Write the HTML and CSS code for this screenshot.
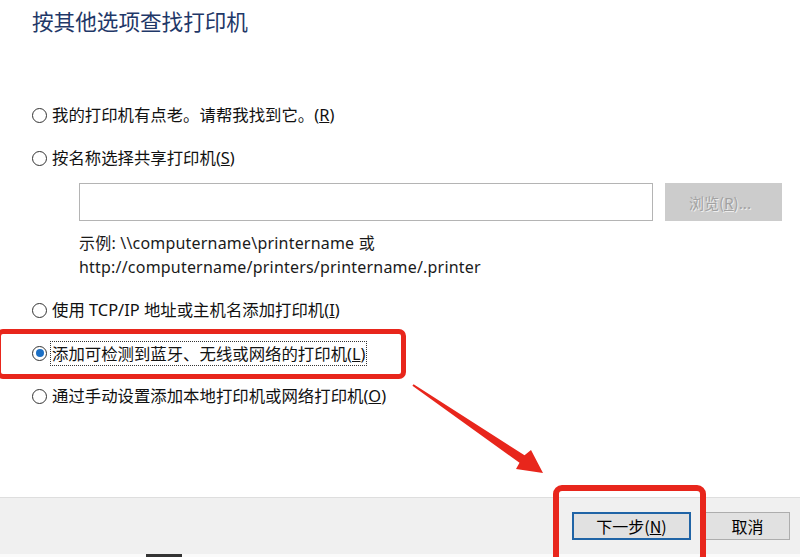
FILE: index.html
```html
<!DOCTYPE html>
<html lang="zh-CN">
<head>
	<meta charset="UTF-8">
	<title>添加打印机</title>
	<link rel="stylesheet" href="styles.css">
</head>
<body>
	<div class="wizard">
		<section class="main">
			<h1 class="title">按其他选项查找打印机</h1>
			<ul class="options">
				<li class="option"><span class="radio"></span><span class="label">我的打印机有点老。请帮我找到它。(<u>R</u>)</span></li>
				<li class="option"><span class="radio"></span><span class="label">按名称选择共享打印机(<u>S</u>)</span></li>
				<li class="share">
					<div class="share-row">
						<div class="input"></div>
						<div class="browse">浏览(<u>R</u>)...</div>
					</div>
					<p class="example">示例: \\computername\printername 或<br>http://computername/printers/printername/.printer</p>
				</li>
				<li class="option"><span class="radio"></span><span class="label">使用 TCP/IP 地址或主机名添加打印机(<u>I</u>)</span></li>
				<li class="option on"><span class="radio"></span><span class="label focus">添加可检测到蓝牙、无线或网络的打印机(<u>L</u>)</span></li>
				<li class="option"><span class="radio"></span><span class="label">通过手动设置添加本地打印机或网络打印机(<u>O</u>)</span></li>
			</ul>
		</section>
		<footer class="footer">
			<div class="buttons">
				<div class="btn default">下一步(<u>N</u>)</div>
				<div class="btn">取消</div>
			</div>
			<div class="edge"><span></span></div>
		</footer>

		<!-- 标注 -->
		<div class="mark mark-option"></div>
		<div class="mark mark-next"></div>
		<svg class="arrow" width="160" height="120" viewBox="0 0 160 120">
			<polygon points="13.6,14.2 124.5,85.3 131,80 143,103 116,99 119.5,92.7 12.4,15.8" fill="#e8261c"/>
		</svg>
	</div>
</body>
</html>
```

FILE: styles.css
```css
* {
	margin:0;
	padding:0;
	box-sizing:border-box;
}
html,body {
	height:100%;
	overflow:hidden;
	background:#fff;
}
body {
	font-family:"Noto Sans","Noto Sans CJK SC",sans-serif;
	color:#111;
}
ul {
	list-style:none;
}
.wizard {
	position:relative;
	height:557px;
	display:flex;
	flex-direction:column;
}
.main {
	flex:1;
	padding:8px 0 0 32px;
}
.title {
	font-family:"Noto Sans CJK SC",sans-serif;
	font-weight:normal;
	font-size:21.6px;
	line-height:26px;
	color:#1f3868;
}
.options {
	margin-top:71px;
}
.option {
	display:flex;
	align-items:center;
	height:20px;
	font-size:16.4px;
	line-height:20px;
	margin-bottom:23px;
}
.radio {
	width:15px;
	height:15px;
	border:1px solid #333;
	border-radius:50%;
	margin-right:5px;
	display:flex;
	align-items:center;
	justify-content:center;
	flex-shrink:0;
}
.option.on .radio:after {
	content:"";
	width:8px;
	height:8px;
	border-radius:50%;
	background:#1c6fc4;
}
.label {
	white-space:nowrap;
}
.label.focus {
	border:1px dotted #333;
	padding:1px 1px;
	margin-left:-2px;
	line-height:21px;
}
.share {
	margin:-8px 0 21px 47px;
}
.share-row {
	display:flex;
	gap:12px;
	height:38px;
}
.input {
	width:574px;
	border:1px solid #b4b4b4;
	background:#fff;
}
.browse {
	width:117px;
	background:#cccccc;
	color:#a2a2a2;
	text-shadow:1px 1px 0 #eee;
	font-family:"Noto Sans CJK SC",sans-serif;
	font-size:15px;
	display:flex;
	align-items:center;
	padding-left:24px;
}
.example {
	margin-top:10px;
	font-size:16px;
	letter-spacing:0.2px;
	line-height:24px;
	color:#1a1a1a;
}
.footer {
	height:60px;
	background:#f0f0f0;
	border-top:1px solid #dedede;
	display:flex;
	flex-direction:column;
}
.buttons {
	flex:1;
	display:flex;
	justify-content:flex-end;
	gap:14px;
	padding:14px 10px 0 0;
}
.btn {
	width:85px;
	height:28px;
	border:1px solid #adadad;
	background:#e1e1e1;
	font-family:"Noto Sans CJK SC",sans-serif;
	font-size:16px;
	line-height:26px;
	text-align:center;
	color:#000;
}
.btn.default {
	width:119px;
	border:2px solid #2064a6;
	line-height:24px;
}
.edge {
	height:3px;
	background:#fafafa;
	padding-left:146px;
}
.edge span {
	display:block;
	width:36px;
	height:3px;
	background:#333;
}
.mark {
	position:absolute;
	border:5px solid #e8261c;
	border-radius:7px;
}
.mark-option {
	left:-4px;
	top:329px;
	width:410px;
	height:50px;
}
.mark-next {
	left:553px;
	top:485px;
	width:153px;
	height:80px;
	border-width:6px;
	border-radius:9px;
}
.arrow {
	position:absolute;
	left:400px;
	top:370px;
}
```
